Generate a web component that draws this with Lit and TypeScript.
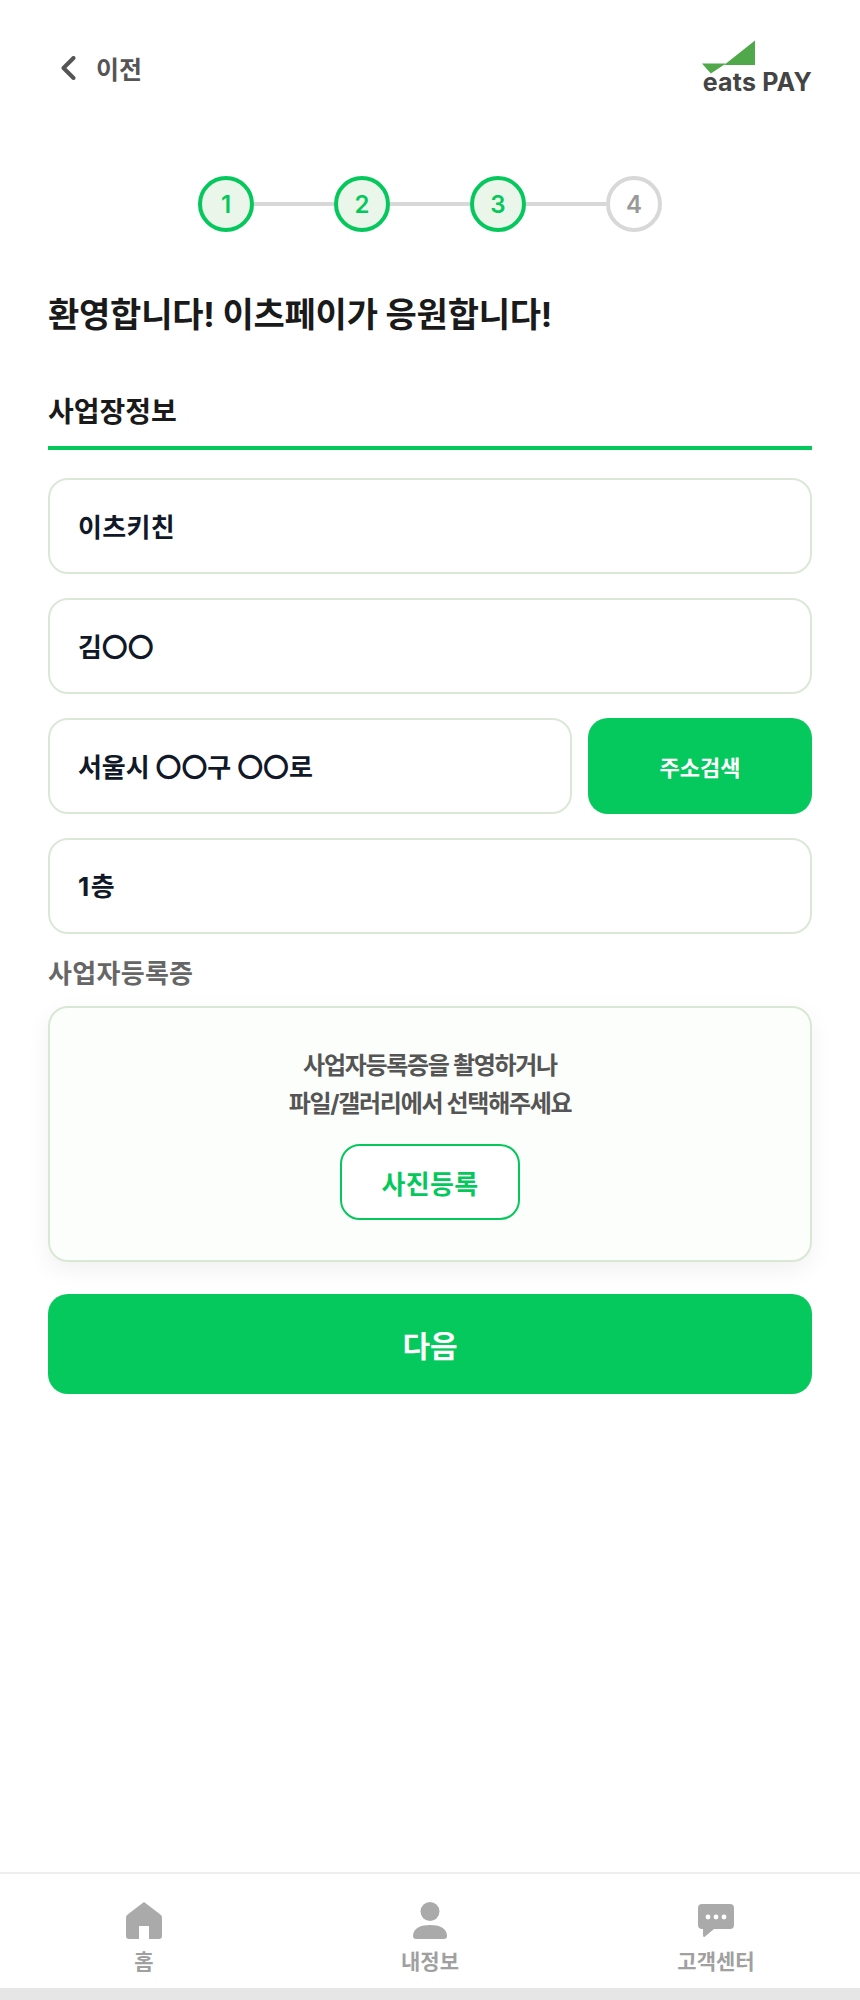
import { LitElement, html, css } from "lit";
import { customElement } from "lit/decorators.js";

@customElement("app-root")
export class AppRoot extends LitElement {
  static styles = css`
    :host {
      display: block;
      height: 2000px;
      background: #e6e6e6;
      font-family: "Inter", "Noto Sans CJK KR", sans-serif;
      color: #111;
    }
    * { box-sizing: border-box; }
    .page {
      height: 1988px;
      background: #fff;
      display: flex;
      flex-direction: column;
    }
    main { flex: 1; padding: 0 48px; display: flex; flex-direction: column; }
    .header {
      height: 136px;
      padding: 40px 0 0 13px;
      display: flex;
      justify-content: space-between;
      align-items: flex-start;
    }
    .back { display: flex; align-items: center; gap: 19px; height: 56px; font-size: 25px; font-weight: 700; color: #555; }
    .back svg { display: block; }
    .logo { display: flex; flex-direction: column; align-items: flex-end; }
    .logo svg { display: block; margin-right: 56px; }
    .logo span { font-size: 25px; font-weight: 700; color: #444; line-height: 25px; margin-top: -4px; letter-spacing: 0.2px; white-space: nowrap; }
    .steps { display: flex; justify-content: center; align-items: center; margin-top: 40px; }
    .step {
      width: 56px; height: 56px; border-radius: 50%;
      border: 4px solid #05c85c;
      background: #ebf6ea;
      color: #05c85c;
      display: flex; align-items: center; justify-content: center;
      font-size: 24px; font-weight: 600;
    }
    .step.off { border-color: #d8d8d8; background: #fff; color: #999; }
    .conn { width: 80px; height: 4px; background: #d8d8d8; }
    h1 { margin: 60px 0 0; font-size: 34px; line-height: 46px; font-weight: 700; color: #1a1a1a; letter-spacing: -0.22px; }
    h2 { margin: 0; padding: 53px 0 13px; font-size: 28px; line-height: 42px; font-weight: 700; color: #1a1a1a; border-bottom: 4px solid #05c85c; }
    .fields { display: flex; flex-direction: column; gap: 24px; margin-top: 28px; }
    .field {
      height: 96px; border: 2px solid #dbe8d8; border-radius: 20px; background: #fff;
      padding: 0 28px 2px; display: flex; align-items: center; white-space: pre;
      font-size: 26px; font-weight: 700; color: #111827; letter-spacing: 0.3px;
    }
    .field.tight { letter-spacing: -0.1px; }
    .field.wide { letter-spacing: 1.5px; padding-bottom: 4px; }
    .row { display: flex; gap: 16px; }
    .row .field { flex: 1; }
    .search {
      width: 224px; height: 96px; border: 0; border-radius: 20px; background: #05c95c;
      color: #fff; font: inherit; font-size: 22px; font-weight: 700;
    }
    .label { margin-top: 22px; font-size: 26px; line-height: 36px; font-weight: 700; color: #666; letter-spacing: 0.3px; }
    .upload {
      margin-top: 14px; height: 256px; border: 2px solid #d9e8d4; border-radius: 20px; background: #fbfefa;
      box-shadow: 0 8px 24px rgba(0,0,0,0.06);
      display: flex; flex-direction: column; align-items: center; padding-top: 39px;
    }
    .upload p { margin: 0; text-align: center; font-size: 24px; line-height: 38px; font-weight: 700; color: #555; letter-spacing: -1.3px; }
    .photo {
      margin-top: 21px; width: 180px; height: 76px; border: 2px solid #05c85c; border-radius: 20px; background: #fff;
      color: #05c85c; font: inherit; font-size: 26px; font-weight: 700; letter-spacing: 0.3px;
    }
    .next {
      margin-top: 32px; height: 100px; border: 0; border-radius: 20px; background: #05c95c;
      color: #fff; font: inherit; font-size: 30px; font-weight: 700;
    }
    nav {
      height: 116px; border-top: 2px solid #eee; display: grid; grid-template-columns: 288px 284px 288px; background: #fff;
    }
    .item { display: flex; flex-direction: column; align-items: center; padding-top: 28px; font-size: 21px; font-weight: 700; color: #a0a0a0; line-height: 30px; }
    .item svg { display: block; margin-bottom: 8px; }
  `;

  render() {
    return html`
      <div class="page">
        <main>
          <div class="header">
            <div class="back">
              <svg width="16" height="24" viewBox="0 0 16 24" fill="none"><path d="M12.5 2 L2.5 12 L12.5 22" stroke="#555" stroke-width="4" stroke-linecap="round" stroke-linejoin="round"/></svg>
              <span>이전</span>
            </div>
            <div class="logo">
              <svg width="54" height="34" viewBox="0 0 54 34"><path d="M0 23.5 H24 L8.8 33.5 Z" fill="#4fa84a"/><path d="M24 23.5 L53 0.5 V25 H22 Z" fill="#4fa84a"/></svg>
              <span>eats PAY</span>
            </div>
          </div>
          <div class="steps">
            <div class="step">1</div><div class="conn"></div>
            <div class="step">2</div><div class="conn"></div>
            <div class="step">3</div><div class="conn"></div>
            <div class="step off">4</div>
          </div>
          <h1>환영합니다! 이츠페이가 응원합니다!</h1>
          <h2>사업장정보</h2>
          <div class="fields">
            <div class="field">이츠키친</div>
            <div class="field tight">김〇〇</div>
            <div class="row">
              <div class="field tight">서울시 〇〇구 〇〇로</div>
              <button class="search">주소검색</button>
            </div>
            <div class="field wide">1층</div>
          </div>
          <div class="label">사업자등록증</div>
          <div class="upload">
            <p>사업자등록증을 촬영하거나<br />파일/갤러리에서 선택해주세요</p>
            <button class="photo">사진등록</button>
          </div>
          <button class="next">다음</button>
        </main>
        <nav>
          <div class="item">
            <svg width="36" height="37" viewBox="0 0 36 37"><path d="M18 0 L35 13 Q36 14 36 16 V34 Q36 37 33 37 H23 V24 H13 V37 H3 Q0 37 0 34 V16 Q0 14 1 13 Z" fill="#aaa"/></svg>
            <span>홈</span>
          </div>
          <div class="item">
            <svg width="36" height="37" viewBox="0 0 36 37"><circle cx="18" cy="9.5" r="9.5" fill="#aaa"/><path d="M1 34 C1 26 9 23 18 23 C27 23 35 26 35 34 Q35 37 32 37 H4 Q1 37 1 34 Z" fill="#aaa"/></svg>
            <span>내정보</span>
          </div>
          <div class="item">
            <svg width="36" height="37" viewBox="0 0 36 37"><path d="M4 2 H32 Q36 2 36 6 V23 Q36 27 32 27 H16 L7 34.5 Q5 36 5 33 V27 H4 Q0 27 0 23 V6 Q0 2 4 2 Z" fill="#aaa"/><circle cx="10" cy="15" r="2.4" fill="#fff"/><circle cx="18" cy="15" r="2.4" fill="#fff"/><circle cx="26" cy="15" r="2.4" fill="#fff"/></svg>
            <span>고객센터</span>
          </div>
        </nav>
      </div>
    `;
  }
}
